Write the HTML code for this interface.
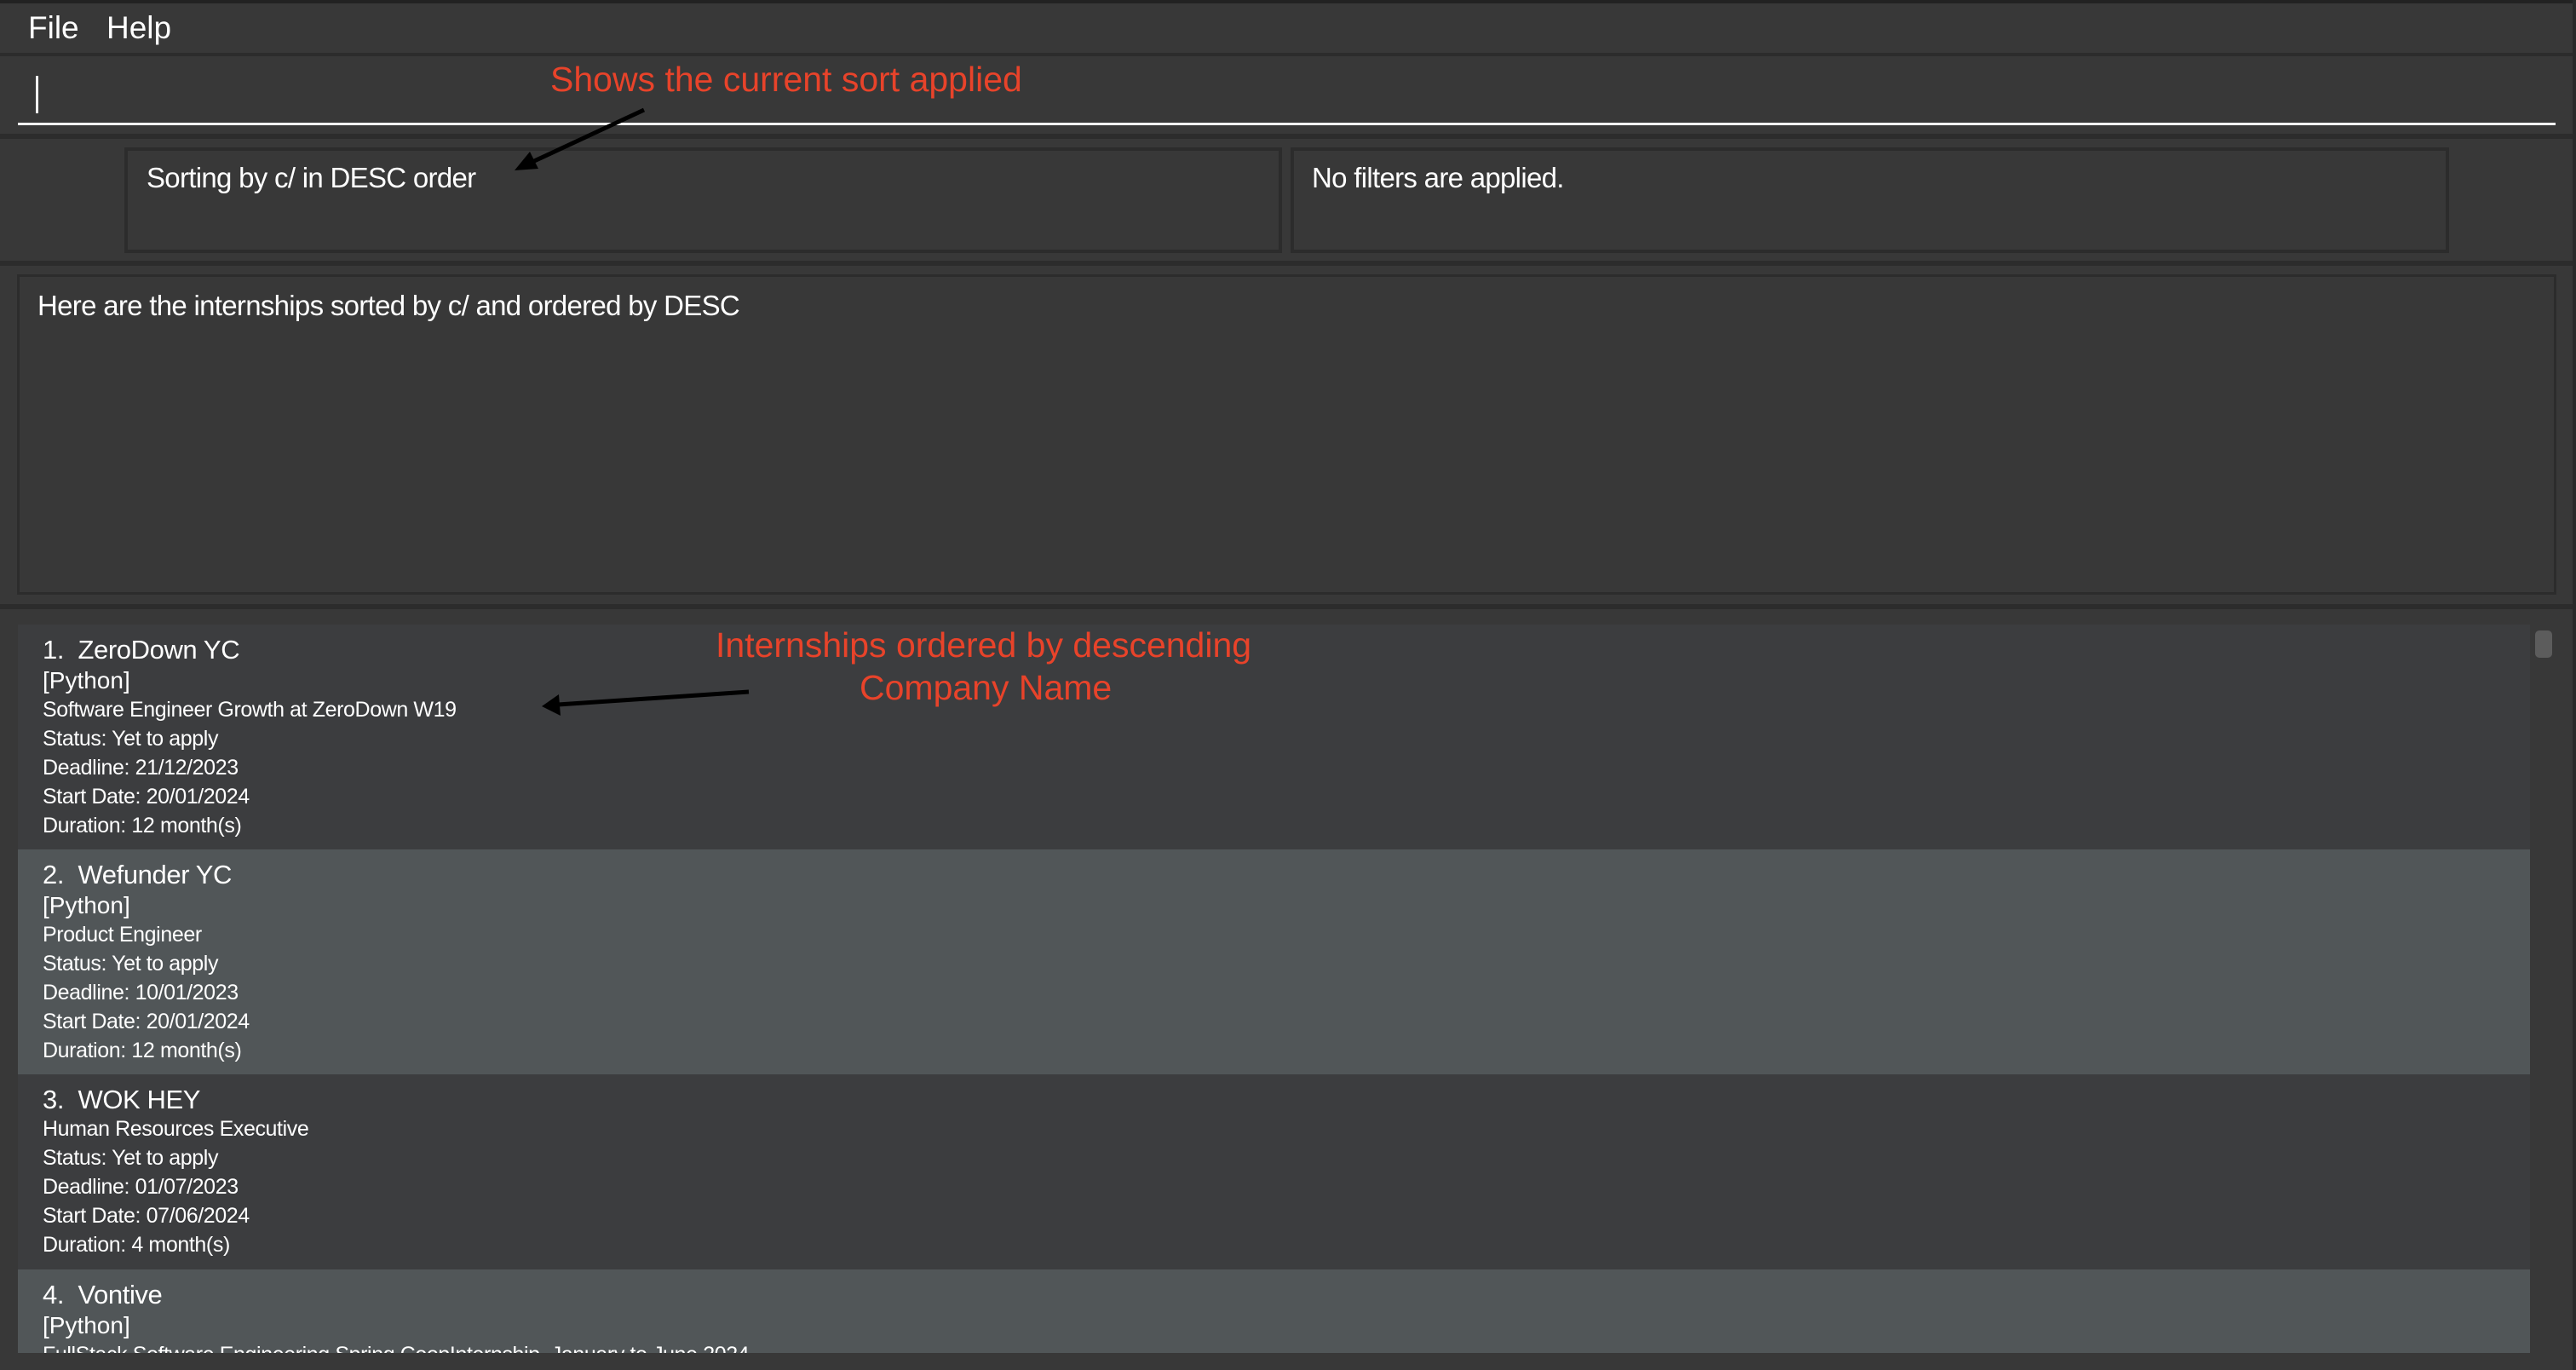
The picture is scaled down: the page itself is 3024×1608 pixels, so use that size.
<!DOCTYPE html>
<html><head><meta charset="utf-8"><style>
*{margin:0;padding:0;box-sizing:border-box}
body{width:3024px;height:1608px;background:#383838;position:relative;overflow:hidden;font-family:"Liberation Sans",sans-serif;color:#fff}
.a{position:absolute}
.sep{position:absolute;left:0;width:3020px;height:6px;background:#2c2c2c}
.box{position:absolute;border:4px solid #2c2c2c;background:#383838}
.card{position:absolute;left:21px;width:2949px}
.card div{position:absolute;left:29px;white-space:nowrap}
.t{font-size:31px;letter-spacing:-0.4px}
.g{font-size:28px}
.d{font-size:25px;letter-spacing:-0.4px}
.red{position:absolute;color:#e8432a;font-family:"Liberation Sans Narrow","Liberation Sans",sans-serif;font-size:41px;white-space:nowrap}
.m{letter-spacing:-0.7px}
</style></head><body>
<div class="a" style="left:0;top:0;width:3024px;height:4px;background:#222"></div>
<div class="a" style="left:33px;top:12px;font-size:37px">File</div>
<div class="a" style="left:125px;top:12px;font-size:37px">Help</div>
<div class="sep" style="top:62px;height:4px"></div>
<div class="a" style="left:42px;top:89px;width:3px;height:44px;background:#fff"></div>
<div class="a" style="left:21px;top:144px;width:2979px;height:3px;background:#fff"></div>
<div class="sep" style="top:157px"></div>
<div class="box" style="left:146px;top:173px;width:1359px;height:124px"></div>
<div class="a m" style="left:172px;top:190px;font-size:33px">Sorting by c/ in DESC order</div>
<div class="box" style="left:1515px;top:173px;width:1360px;height:124px"></div>
<div class="a m" style="left:1540px;top:190px;font-size:33px">No filters are applied.</div>
<div class="sep" style="top:306px"></div>
<div class="box" style="left:20px;top:322px;width:2981px;height:376px;border-width:3px"></div>
<div class="a m" style="left:44px;top:340px;font-size:33px">Here are the internships sorted by c/ and ordered by DESC</div>
<div class="sep" style="top:709px"></div>
<div class="a" style="left:21px;top:733px;width:2949px;height:855px;background:#3c3d3f;overflow:hidden">
</div>
<div class="card" style="top:733px;height:264px;background:#3c3d3f">
<div class="t" style="top:12px">1.&nbsp; ZeroDown YC</div>
<div class="g" style="top:50px">[Python]</div>
<div class="d" style="top:86px">Software Engineer Growth at ZeroDown W19</div>
<div class="d" style="top:120px">Status: Yet to apply</div>
<div class="d" style="top:154px">Deadline: 21/12/2023</div>
<div class="d" style="top:188px">Start Date: 20/01/2024</div>
<div class="d" style="top:222px">Duration: 12 month(s)</div>
</div>
<div class="card" style="top:997px;height:264px;background:#515658">
<div class="t" style="top:12px">2.&nbsp; Wefunder YC</div>
<div class="g" style="top:50px">[Python]</div>
<div class="d" style="top:86px">Product Engineer</div>
<div class="d" style="top:120px">Status: Yet to apply</div>
<div class="d" style="top:154px">Deadline: 10/01/2023</div>
<div class="d" style="top:188px">Start Date: 20/01/2024</div>
<div class="d" style="top:222px">Duration: 12 month(s)</div>
</div>
<div class="card" style="top:1261px;height:229px;background:#3c3d3f">
<div class="t" style="top:12px">3.&nbsp; WOK HEY</div>
<div class="d" style="top:50px">Human Resources Executive</div>
<div class="d" style="top:84px">Status: Yet to apply</div>
<div class="d" style="top:118px">Deadline: 01/07/2023</div>
<div class="d" style="top:152px">Start Date: 07/06/2024</div>
<div class="d" style="top:186px">Duration: 4 month(s)</div>
</div>
<div class="card" style="top:1490px;height:98px;background:#515658;overflow:hidden">
<div class="t" style="top:12px">4.&nbsp; Vontive</div>
<div class="g" style="top:50px">[Python]</div>
<div class="d" style="top:86px">FullStack Software Engineering Spring CoopInternship, January to June 2024</div>
</div>
<div class="a" style="left:2976px;top:740px;width:20px;height:32px;background:#5c5c5c;border-radius:5px"></div>
<div class="a" style="left:3020px;top:0;width:4px;height:1608px;background:#2a2a2a"></div>
<div class="red" style="left:646px;top:70px">Shows the current sort applied</div>
<div class="red" style="left:840px;top:734px">Internships ordered by descending</div>
<div class="red" style="left:1009px;top:784px">Company Name</div>
<svg class="a" style="left:0;top:0" width="3024" height="1608">
<line x1="756" y1="129" x2="625" y2="190" stroke="#000" stroke-width="5"/>
<polygon points="604,200 622,178 632,198" fill="#000"/>
<line x1="879" y1="812" x2="655" y2="827" stroke="#000" stroke-width="5"/>
<polygon points="636,829 656,815 658,840" fill="#000"/>
</svg>
</body></html>
